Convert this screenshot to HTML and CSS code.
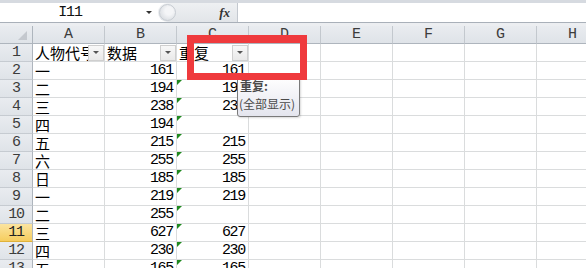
FILE: index.html
```html
<!DOCTYPE html>
<html>
<head>
<meta charset="utf-8">
<link rel="stylesheet" href="styles.css">
</head>
<body>
<div class="app">
  <div class="topstrip"></div>
  <div class="fbar">
    <div class="namebox"><span class="nb-text">I11</span><span class="nb-arrow"></span></div>
    <div class="fctl"><span class="knob"></span><span class="fx">fx</span></div>
    <div class="finput"></div>
  </div>
  <div class="gap"></div>
  <div class="sheet">
    <div class="corner"><span class="tri"></span></div>
    <div class="ch">A</div><div class="ch">B</div><div class="ch">C</div><div class="ch">D</div><div class="ch">E</div><div class="ch">F</div><div class="ch">G</div><div class="ch">H</div>

    <div class="rh">1</div>
    <div class="c hd"><span class="t">人物代号</span><span class="dd"></span></div>
    <div class="c hd"><span class="t">数据</span><span class="dd"></span></div>
    <div class="c hd"><span class="t">重复</span><span class="dd"></span></div>
    <div class="c"></div><div class="c"></div><div class="c"></div><div class="c"></div><div class="c"></div>

    <div class="rh">2</div>
    <div class="c cj">一</div><div class="c n">161</div><div class="c n">161</div>
    <div class="c"></div><div class="c"></div><div class="c"></div><div class="c"></div><div class="c"></div>

    <div class="rh">3</div>
    <div class="c cj">二</div><div class="c n">194</div><div class="c n g">194</div>
    <div class="c"></div><div class="c"></div><div class="c"></div><div class="c"></div><div class="c"></div>

    <div class="rh">4</div>
    <div class="c cj">三</div><div class="c n">238</div><div class="c n g">238</div>
    <div class="c"></div><div class="c"></div><div class="c"></div><div class="c"></div><div class="c"></div>

    <div class="rh">5</div>
    <div class="c cj">四</div><div class="c n">194</div><div class="c n g"></div>
    <div class="c"></div><div class="c"></div><div class="c"></div><div class="c"></div><div class="c"></div>

    <div class="rh">6</div>
    <div class="c cj">五</div><div class="c n">215</div><div class="c n g">215</div>
    <div class="c"></div><div class="c"></div><div class="c"></div><div class="c"></div><div class="c"></div>

    <div class="rh">7</div>
    <div class="c cj">六</div><div class="c n">255</div><div class="c n g">255</div>
    <div class="c"></div><div class="c"></div><div class="c"></div><div class="c"></div><div class="c"></div>

    <div class="rh">8</div>
    <div class="c cj">日</div><div class="c n">185</div><div class="c n g">185</div>
    <div class="c"></div><div class="c"></div><div class="c"></div><div class="c"></div><div class="c"></div>

    <div class="rh">9</div>
    <div class="c cj">一</div><div class="c n">219</div><div class="c n g">219</div>
    <div class="c"></div><div class="c"></div><div class="c"></div><div class="c"></div><div class="c"></div>

    <div class="rh">10</div>
    <div class="c cj">二</div><div class="c n">255</div><div class="c n g"></div>
    <div class="c"></div><div class="c"></div><div class="c"></div><div class="c"></div><div class="c"></div>

    <div class="rh sel">11</div>
    <div class="c cj">三</div><div class="c n">627</div><div class="c n g">627</div>
    <div class="c"></div><div class="c"></div><div class="c"></div><div class="c"></div><div class="c"></div>

    <div class="rh">12</div>
    <div class="c cj">四</div><div class="c n">230</div><div class="c n g">230</div>
    <div class="c"></div><div class="c"></div><div class="c"></div><div class="c"></div><div class="c"></div>

    <div class="rh">13</div>
    <div class="c cj">五</div><div class="c n">165</div><div class="c n g">165</div>
    <div class="c"></div><div class="c"></div><div class="c"></div><div class="c"></div><div class="c"></div>
  </div>
  <div class="tip"><div class="tip-title">重复:</div><div class="tip-body">(全部显示)</div></div>
  <div class="redbox"></div>
</div>
</body>
</html>
```

FILE: styles.css
```css
* { box-sizing: border-box; margin: 0; padding: 0; }
body {
  margin: 0;
  width: 586px;
  height: 268px;
  overflow: hidden;
  background: #fff;
  font-family: "Noto Sans CJK SC", sans-serif;
}
.app {
  position: relative;
  width: 586px;
  height: 268px;
  overflow: hidden;
}
.topstrip { height: 3px; background: #d6dae0; }
.fbar {
  display: flex;
  height: 20px;
  background: #fff;
  border-bottom: 1px solid #a9b0b9;
}
.namebox {
  width: 158px;
  display: flex;
  align-items: center;
  position: relative;
}
.nb-text {
  width: 140px;
  text-align: center;
  font-family: "Liberation Mono", monospace;
  font-size: 15px;
  letter-spacing: -1.2px;
  color: #111;
  line-height: 19px;
}
.nb-arrow {
  width: 0; height: 0;
  margin-left: 6px;
  border-left: 3px solid transparent;
  border-right: 3px solid transparent;
  border-top: 3px solid #333;
}
.fctl {
  width: 80px;
  height: 19px;
  display: flex;
  align-items: center;
  background: linear-gradient(#eef0f2, #e2e5e9);
  border-radius: 10px 0 0 10px;
  border-right: 1px solid #c3c8cf;
}
.knob {
  width: 17px;
  height: 17px;
  margin-left: 1px;
  border-radius: 50%;
  border: 1px solid #c7ccd2;
  background: radial-gradient(circle at 60% 40%, #f4f5f7 0 30%, #dfe2e6 70%);
}
.fx {
  margin-left: auto;
  margin-right: 7px;
  font-family: "Liberation Serif", serif;
  font-style: italic;
  font-weight: bold;
  font-size: 13px;
  color: #333;
}
.finput { flex: 1; background: #fff; }
.gap { height: 3px; background: #eceef1; }

.sheet {
  display: grid;
  grid-template-columns: 33px repeat(8, 72px);
  grid-auto-rows: 18px;
  width: 609px;
}
.corner, .ch, .rh {
  background: linear-gradient(#e9ecf0, #dfe3e8);
  border-right: 1px solid #c3c8ce;
  border-bottom: 1px solid #aeb5bd;
}
.corner { position: relative; border-right-color: #aeb5bd; }
.tri {
  position: absolute;
  right: 5px;
  bottom: 3px;
  width: 9px;
  height: 9px;
  background: #c4c8ce;
  clip-path: polygon(100% 0, 100% 100%, 0 100%);
}
.ch {
  display: flex;
  justify-content: center;
  align-items: center;
  font-family: "Liberation Mono", monospace;
  font-size: 15px;
  color: #3c3c3c;
  line-height: 17px;
}
.rh {
  display: flex;
  justify-content: center;
  align-items: center;
  font-family: "Liberation Mono", monospace;
  font-size: 15px;
  letter-spacing: -1.2px;
  color: #3c3c3c;
  border-right-color: #aeb5bd;
  border-bottom-color: #c6cbd1;
  line-height: 17px;
}
.rh.sel {
  background: linear-gradient(#fbe4a0, #f6cd5e);
  border-bottom-color: #e0b23a;
  color: #222;
}
.c {
  position: relative;
  border-right: 1px solid #dadcdd;
  border-bottom: 1px solid #dadcdd;
  display: flex;
  align-items: flex-end;
  overflow: hidden;
  color: #000;
}
.cj {
  padding-left: 2px;
  font-size: 15px;
  line-height: 17px;
}
.n {
  justify-content: flex-end;
  padding-right: 3px;
  font-family: "Liberation Mono", monospace;
  font-size: 15px;
  letter-spacing: -1.3px;
  line-height: 16px;
}
.g::before {
  content: "";
  position: absolute;
  left: 0;
  top: 0;
  width: 5px;
  height: 5px;
  background: #1f8a1f;
  clip-path: polygon(0 0, 100% 0, 0 100%);
}
.hd {
  padding-left: 2px;
  align-items: center;
}
.hd .t {
  flex: 1;
  min-width: 0;
  overflow: hidden;
  white-space: nowrap;
  font-size: 15px;
  line-height: 17px;
}
.dd {
  flex: none;
  width: 16px;
  height: 16px;
  background: linear-gradient(#f8f8f8, #e9e9e9);
  border: 1px solid #cfcfcf;
  display: flex;
  align-items: center;
  justify-content: center;
}
.dd::after {
  content: "";
  width: 0; height: 0;
  border-left: 3.5px solid transparent;
  border-right: 3.5px solid transparent;
  border-top: 3.5px solid #555;
}
.tip {
  position: absolute;
  left: 237px;
  top: 76px;
  width: 63px;
  height: 41px;
  border: 1px solid #7a7a7a;
  border-radius: 3px;
  background: linear-gradient(#ffffff, #e4e5ee);
  box-shadow: 1px 1px 2px rgba(0,0,0,0.15);
  padding: 0 0 0 2px;
  font-size: 12px;
  line-height: 17px;
  color: #4a4a4a;
  z-index: 1;
}
.tip-title { font-weight: bold; }
.tip-body { margin-left: -1px; margin-top: 1px; white-space: nowrap; }
.redbox {
  position: absolute;
  left: 187px;
  top: 35px;
  width: 120px;
  height: 45px;
  border: 7px solid #ef3a3d;
  border-top-width: 8px;
  z-index: 2;
}
```
